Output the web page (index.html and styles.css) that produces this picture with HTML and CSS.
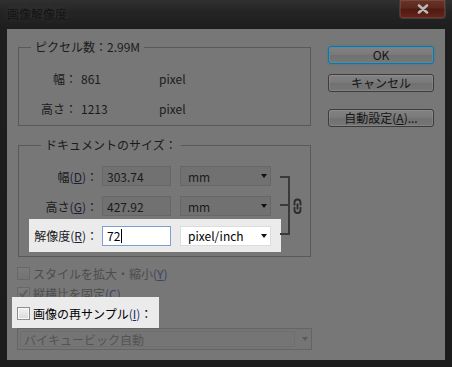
FILE: index.html
```html
<!DOCTYPE html>
<html lang="ja">
<head>
    <meta charset="UTF-8">
    <meta name="viewport" content="width=device-width, initial-scale=1.0">
    <title>画像解像度</title>
    <link rel="stylesheet" href="styles.css">
</head>
<body>
    <div class="window">
        <div class="titlebar">
            <span class="title">画像解像度</span>
            <button class="close" type="button">
                <svg width="12" height="10" viewBox="0 0 12 10"><path d="M2 1.5 L10 8.5 M10 1.5 L2 8.5" stroke="#b8b8b8" stroke-width="2.6" stroke-linecap="round"/></svg>
            </button>
        </div>

        <div class="client">
            <div class="main">
                <fieldset class="group">
                    <legend>ピクセル数：2.99M</legend>
                    <div class="pixel-grid">
                        <span class="lbl">幅：</span><span>861</span><span>pixel</span>
                        <span class="lbl">高さ：</span><span>1213</span><span>pixel</span>
                    </div>
                </fieldset>

                <fieldset class="group doc">
                    <legend>ドキュメントのサイズ：</legend>
                    <div class="doc-body">
                        <div class="doc-rows">
                            <div class="row">
                                <label class="lbl">幅<span class="mn">(<u>D</u>)</span>：</label>
                                <div class="field">303.74</div>
                                <div class="select"><span>mm</span><i class="arrow"></i></div>
                            </div>
                            <div class="row">
                                <label class="lbl">高さ<span class="mn">(<u>G</u>)</span>：</label>
                                <div class="field">427.92</div>
                                <div class="select"><span>mm</span><i class="arrow"></i></div>
                            </div>
                            <div class="row hl">
                                <label class="lbl">解像度<span class="mn">(<u>R</u>)</span>：</label>
                                <div class="field active">72<span class="caret"></span></div>
                                <div class="select"><span>pixel/inch</span><i class="arrow"></i></div>
                            </div>
                        </div>
                        <svg class="link" width="23" height="62" viewBox="0 0 23 62">
                            <path d="M0 2 H9 V59 H0 M0 30 H9" fill="none" stroke="#3a3a3a" stroke-width="2"/>
                            <path d="M14.5 30.5 V27.5 a3 3 0 0 1 6 0 V30.5 M14.5 32 V35 a3 3 0 0 0 6 0 V32 M17.5 28.5 V34.5" fill="none" stroke="#2c2c2c" stroke-width="1.8"/>
                        </svg>
                    </div>
                </fieldset>

                <div class="checks">
                    <div class="check disabled"><span class="box"></span>スタイルを拡大・縮小<span class="mn">(<u>Y</u>)</span></div>
                    <div class="check disabled"><span class="box"><svg width="11" height="11" viewBox="0 0 11 11"><path d="M2 5.5 L4.5 8.5 L9 2" fill="none" stroke="#5c5c5c" stroke-width="1.8"/></svg></span>縦横比を固定<span class="mn">(<u>C</u>)</span></div>
                    <div class="check hl"><span class="box"></span>画像の再サンプル<span class="mn">(<u>I</u>)</span>：</div>
                </div>

                <div class="select wide"><span class="inner">バイキュービック自動</span><i class="arrow"></i></div>
            </div>

            <div class="buttons">
                <button class="btn default" type="button">OK</button>
                <button class="btn" type="button">キャンセル</button>
                <button class="btn auto" type="button">自動設定(<u>A</u>)...</button>
            </div>
        </div>
    </div>
</body>
</html>
```

FILE: styles.css
```css
* {
    box-sizing: border-box;
}

body {
    margin: 0;
    background: #1b1b1b;
    font-family: "Noto Sans CJK JP", "Noto Sans", sans-serif;
    font-size: 12px;
    color: #1b1b1b;
}

.window {
    width: 452px;
    height: 367px;
    display: flex;
    flex-direction: column;
    background: linear-gradient(180deg, #303030 0, #242424 12px, #1e1e1e 28px, #1c1c1c 100%);
}

.titlebar {
    height: 28px;
    flex: none;
    display: flex;
    align-items: flex-start;
    padding-left: 7px;
}

.title {
    line-height: 28px;
    color: #141414;
    text-shadow: 0 0 8px rgba(255, 255, 255, 0.12);
}

.close {
    margin-left: auto;
    margin-right: 6px;
    width: 47px;
    height: 19px;
    padding: 0;
    border: 1px solid #3c3c3c;
    border-top: none;
    border-radius: 0 0 4px 4px;
    background: linear-gradient(180deg, #6a3428 0, #5c271c 45%, #4e1a12 50%, #672419 100%);
    box-shadow: inset 0 0 0 1px rgba(255, 255, 255, 0.1);
    display: flex;
    align-items: center;
    justify-content: center;
}

.client {
    margin: 0 6px;
    height: 333px;
    flex: none;
    border: 1px solid #1e1e1e;
    background: #777777;
    display: flex;
    padding-left: 10px;
}

.main {
    width: 295px;
    display: flex;
    flex-direction: column;
    padding-top: 10px;
}

.group {
    margin: 0 0 0 1px;
    width: 293px;
    min-width: 0;
    border: 1px solid #595959;
    padding: 8px 0 2px 0;
}

.group legend {
    margin-left: 12px;
    padding: 0 4px;
    height: 16px;
    line-height: 16px;
}

.pixel-grid {
    display: grid;
    grid-template-columns: 58px 74px auto;
    column-gap: 4px;
    grid-auto-rows: 30px;
    align-items: center;
}

.lbl {
    text-align: right;
}

.mn {
    color: #1c2236;
}

.doc {
    margin-top: 11px;
    padding: 8px 0 4px 10px;
}

.doc-body {
    display: flex;
    align-items: flex-start;
}

.doc-rows {
    display: flex;
    flex-direction: column;
}

.row {
    display: flex;
    align-items: center;
    height: 30px;
    padding-right: 10px;
}

.row.hl {
    height: 33px;
    margin-top: -2px;
    background: #ebebeb;
}

.row .lbl {
    width: 69px;
    margin-right: 4px;
}

.field {
    width: 69px;
    height: 20px;
    margin-right: 9px;
    padding-left: 4px;
    border: 1px solid #676767;
    background: #717171;
    display: flex;
    align-items: center;
}

.field.active {
    background: #ffffff;
    border-color: #7c9fd0;
    color: #000;
}

.caret {
    width: 1px;
    height: 14px;
    margin-left: 1px;
    background: #000;
}

.select {
    width: 91px;
    height: 20px;
    padding: 0 3px 0 7px;
    border: 1px solid #676767;
    background: #717171;
    display: flex;
    align-items: center;
}

.row.hl .select {
    background: #ffffff;
    border-color: #dcdcdc;
    color: #000;
}

.arrow {
    margin-left: auto;
    width: 0;
    height: 0;
    border-left: 3px solid transparent;
    border-right: 3px solid transparent;
    border-top: 4px solid #111;
}

.link {
    margin-top: 14px;
    margin-left: -1px;
}

.checks {
    margin-top: 6px;
    display: flex;
    flex-direction: column;
}

.check {
    display: flex;
    align-items: center;
    height: 20px;
}

.check.disabled {
    color: #4c4c4c;
}

.check.disabled .mn {
    color: #3b4463;
}

.box {
    width: 13px;
    height: 13px;
    margin-right: 3px;
    border: 1px solid #686868;
    background: linear-gradient(180deg, #7b7b7b, #737373);
    display: flex;
    align-items: center;
    justify-content: center;
}

.check.hl {
    align-self: flex-start;
    height: 31px;
    margin: -6px 0 0 -5px;
    padding: 6px 7px 5px 5px;
    background: #ebebeb;
    color: #000;
}

.check.hl .mn {
    color: #1d2f6a;
}

.check.hl .box {
    border-color: #8e8e8e;
    background: linear-gradient(180deg, #f3f3f3, #d9d9d9);
    box-shadow: inset 0 0 0 1px #f8f8f8;
}

.select.wide {
    width: 295px;
    height: 22px;
    padding: 2px 3px 2px 2px;
    border-color: #646464;
    background: #757575;
}

.select.wide .inner {
    flex: 1;
    height: 100%;
    padding-left: 3px;
    border: 1px solid #6e6e6e;
    color: #535353;
    display: flex;
    align-items: center;
}

.select.wide .arrow {
    margin-left: 7px;
    border-top-color: #5a5a5a;
}

.buttons {
    width: 106px;
    margin-left: 16px;
    padding-top: 17px;
    display: flex;
    flex-direction: column;
}

.btn {
    height: 18px;
    padding: 0;
    border: 1px solid #3c3c3c;
    border-radius: 3px;
    background: linear-gradient(180deg, #828282 0, #797979 50%, #717171 51%, #767676 100%);
    box-shadow: inset 0 0 0 1px rgba(255, 255, 255, 0.1);
    font: inherit;
    line-height: 16px;
    color: #151515;
}

.btn.default {
    border-color: #24708f;
    box-shadow: inset 0 0 0 1px #4b8fae, 0 0 2px #2c7ea0;
}

.btn + .btn {
    margin-top: 10px;
}

.btn.auto {
    margin-top: 17px;
}
```
